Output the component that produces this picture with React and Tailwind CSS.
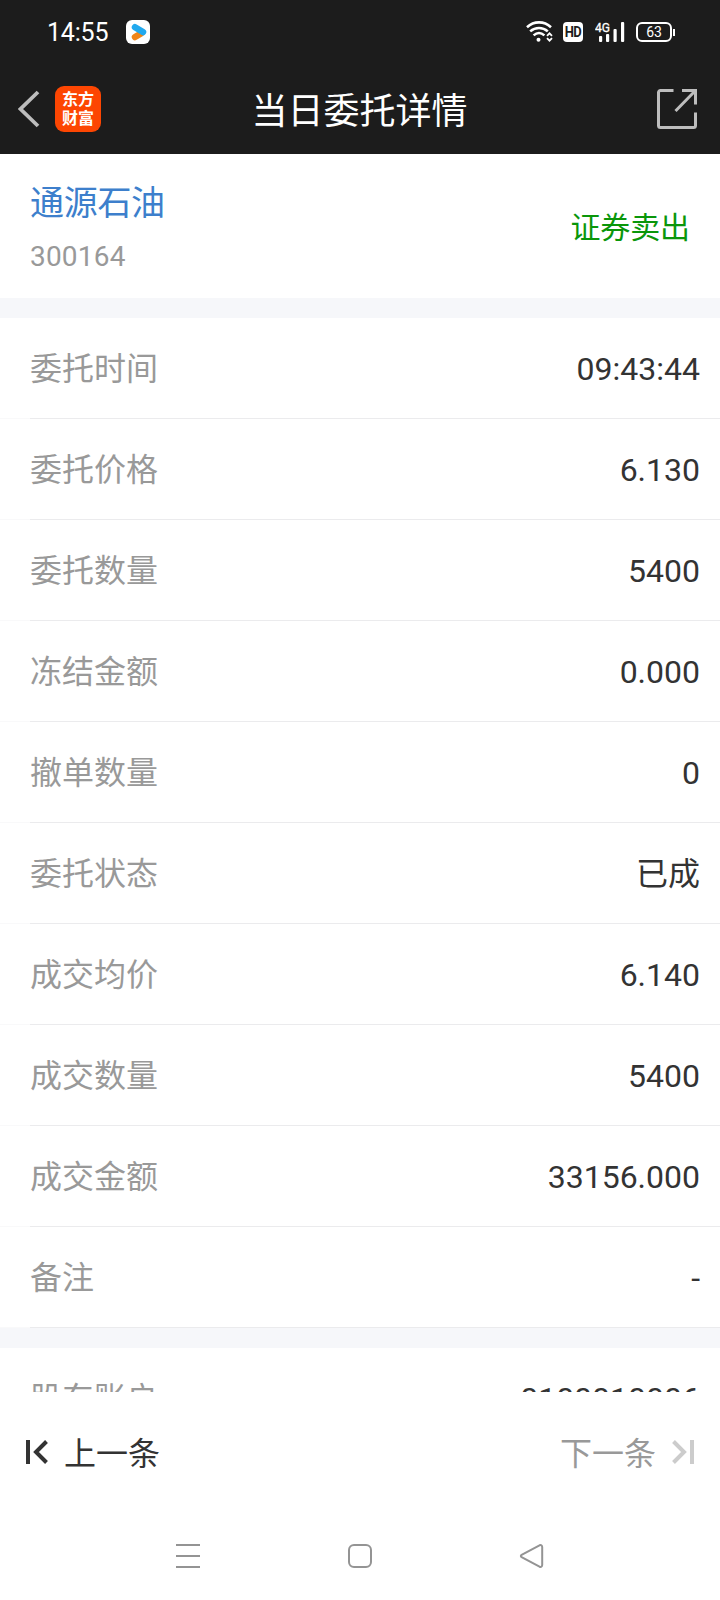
import React from 'react';

const orderRows = [
  { label: '委托时间', value: '09:43:44' },
  { label: '委托价格', value: '6.130' },
  { label: '委托数量', value: '5400' },
  { label: '冻结金额', value: '0.000' },
  { label: '撤单数量', value: '0' },
  { label: '委托状态', value: '已成' },
  { label: '成交均价', value: '6.140' },
  { label: '成交数量', value: '5400' },
  { label: '成交金额', value: '33156.000' },
  { label: '备注', value: '-' },
];

const WifiIcon = () => (
  <svg width="27" height="22" viewBox="0 0 27 22" fill="none" stroke="#fff" strokeWidth="2.6">
    <path d="M1 6.200C8-.2 18-.2 25 6.200" />
    <path d="M4.200 10.400c5.200-4.600 12.400-4.600 17.600 0" />
    <path d="M7.600 14.400c3.400-3 7.400-3 10.800 0" />
    <circle cx="12.500" cy="18.800" r="2" fill="#fff" stroke="none" />
    <path d="M21 14.800l2.500-2.500 2.500 2.500M21 17.200l2.500 2.500 2.500-2.500" strokeWidth="1.800" />
  </svg>
);

const SignalIcon = () => (
  <svg width="30" height="22" viewBox="0 0 30 22" fill="#fff">
    <text x="0" y="10.500" fontSize="13" fontFamily="Roboto, sans-serif" stroke="#fff" strokeWidth="0.3" textLength="15" lengthAdjust="spacingAndGlyphs">4G</text>
    <rect x="4" y="15" width="3.200" height="6" rx="1" />
    <rect x="11" y="13" width="3.200" height="8" rx="1" />
    <rect x="18.500" y="8" width="3.200" height="13" rx="1" />
    <rect x="26" y="1" width="3.200" height="20" rx="1" />
  </svg>
);

const PlayerIcon = () => (
  <svg width="24" height="24" viewBox="0 0 24 24">
    <rect width="24" height="24" rx="6" fill="#fff" />
    <path d="M9 17l6-3.500" stroke="#f08519" strokeWidth="6.500" strokeLinecap="round" />
    <path d="M9 7.200l8 4.800" stroke="#22a9ee" strokeWidth="6.500" strokeLinecap="round" />
  </svg>
);

const StatusBar = () => (
  <div className="flex h-16 items-center pl-[47px] pr-[45px] text-white">
    <span className="w-[62px] text-[25px] leading-none tracking-[-0.2px]">14:55</span>
    <div className="ml-[17px]">
      <PlayerIcon />
    </div>
    <div className="ml-auto flex items-center">
      <WifiIcon />
      <span className="ml-[10px] flex h-5 w-5 items-center justify-center rounded bg-white text-[#1c1c1c]">
        <span className="scale-y-110 font-[Roboto] text-[13px] font-bold leading-none tracking-[-0.5px]">HD</span>
      </span>
      <div className="ml-3">
        <SignalIcon />
      </div>
      <span className="ml-[11px] flex h-5 w-9 items-center justify-center rounded-[6px] border-2 border-white text-[14px] leading-none">63</span>
      <span className="ml-px h-[7px] w-[2px] bg-white" />
    </div>
  </div>
);

const TitleBar = () => (
  <div className="grid h-[90px] grid-cols-[1fr_auto_1fr] items-center pl-[18px] pr-[22px]">
    <div className="flex items-center">
      <svg width="22" height="38" viewBox="0 0 22 38" fill="none" stroke="#bdbdbd" strokeWidth="3.800">
        <path d="M20 2L2.500 19 20 36" />
      </svg>
      <span className="ml-[15px] flex size-[46px] flex-col items-center justify-center rounded-[9px] bg-[#fd4602] text-[16px] font-bold leading-[19px] text-white">
        <span>东方</span>
        <span>财富</span>
      </span>
    </div>
    <h1 className="pl-[3px] pt-[6px] text-[36px] leading-none text-white">当日委托详情</h1>
    <svg className="justify-self-end" width="42" height="42" viewBox="0 0 42 42" fill="none" stroke="#bdbdbd" strokeWidth="3">
      <path d="M17.500 2.500H4.500a2 2 0 0 0-2 2v33a2 2 0 0 0 2 2h33a2 2 0 0 0 2-2V24.500" />
      <path d="M26 2.500h13.500V16.500M39 3L19.500 23" />
    </svg>
  </div>
);

const DetailRow = ({ label, value }) => (
  <div className="flex h-[101px] flex-col">
    <div className="flex flex-1 items-center justify-between pl-[30px] pr-5 text-[32px] leading-none">
      <span className="pt-[2px] text-[#999]">{label}</span>
      <span className="pt-[2px] text-[#333]">{value}</span>
    </div>
    <div className="bg-[#f9f9fa] pl-[30px]">
      <div className="h-px bg-[#ebebed]" />
    </div>
  </div>
);

const App = () => (
  <div className="flex h-[1600px] w-[720px] flex-col overflow-hidden bg-white font-[Roboto,'Noto_Sans_CJK_SC',sans-serif]">
    <header className="h-[154px] bg-[#1c1c1c]">
      <StatusBar />
      <TitleBar />
    </header>

    <main className="h-[1238px] overflow-hidden">
      <section className="flex h-[144px] items-center justify-between pl-[30px] pr-[30px]">
        <div>
          <div className="text-[34px] leading-[48px] tracking-[-0.3px] text-[#3d7fcc]">通源石油</div>
          <div className="mt-[13px] text-[28px] leading-[34px] tracking-[0.2px] text-[#999]">300164</div>
        </div>
        <span className="pt-[3px] text-[30px] leading-none tracking-[-0.1px] text-[#0a960a]">证券卖出</span>
      </section>
      <div className="h-5 bg-[#f6f7fa]" />
      {orderRows.map(row => (
        <DetailRow key={row.label} label={row.label} value={row.value} />
      ))}
      <div className="h-5 bg-[#f6f7fa]" />
      <DetailRow label="股东账户" value="0100010006" />
    </main>

    <footer className="flex h-[118px] items-center justify-between pl-[25px] pr-[25px] pt-[2px] text-[32px] leading-none">
      <button className="flex items-center text-[#333]">
        <svg width="24" height="26" viewBox="0 0 24 26" fill="none" stroke="currentColor" strokeWidth="4">
          <path d="M3 1v24M21.500 2.500L11 13l10.500 10.500" />
        </svg>
        <span className="ml-[15px] pt-[3px]">上一条</span>
      </button>
      <button className="flex items-center text-[#999]">
        <span className="pt-[3px]">下一条</span>
        <svg className="ml-[15px] text-[#ccc]" width="24" height="26" viewBox="0 0 24 26" fill="none" stroke="currentColor" strokeWidth="4">
          <path d="M21 1v24M2.500 2.500L13 13 2.500 23.500" />
        </svg>
      </button>
    </footer>

    {/* System navigation */}
    <nav className="flex h-[90px] items-start justify-between px-[175px] pt-[33px]">
      <svg width="26" height="26" viewBox="0 0 26 26" stroke="#949494" strokeWidth="2">
        <path d="M1 2h24M1 13h24M1 24h24" />
      </svg>
      <svg width="26" height="26" viewBox="0 0 26 26" fill="none" stroke="#949494" strokeWidth="2">
        <rect x="2" y="2" width="22" height="22" rx="5" />
      </svg>
      <svg width="26" height="26" viewBox="0 0 26 26" fill="none" stroke="#949494" strokeWidth="2" strokeLinejoin="round">
        <path d="M2.600 11.800L20.500 2.300Q23 1.500 23.200 4v18q-.2 2.500-2.700 1.700L2.600 14.200q-1.500-1.200 0-2.400z" />
      </svg>
    </nav>
  </div>
);

export default App;
